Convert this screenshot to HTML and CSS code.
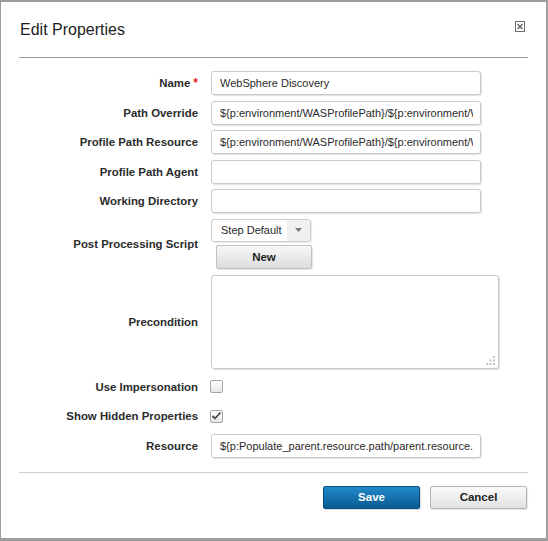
FILE: index.html
```html
<!DOCTYPE html>
<html>
<head>
<meta charset="utf-8">
<link rel="stylesheet" href="styles.css">
</head>
<body>
<div class="dialog">
  <div class="header">
    <h1 class="title">Edit Properties</h1>
    <span class="close">
      <svg width="10" height="11" viewBox="0 0 10 11"><rect x="0.5" y="0.5" width="9" height="10" fill="#fff" stroke="#6f6f6f"/><path d="M2.5 3 L7.5 8 M7.5 3 L2.5 8" stroke="#555" stroke-width="1.1"/></svg>
    </span>
  </div>
  <div class="form">
    <label class="lbl">Name<span class="req">*</span></label>
    <div class="field"><div class="input"><span class="val">WebSphere Discovery</span></div></div>

    <label class="lbl">Path Override</label>
    <div class="field"><div class="input"><span class="val">${p:environment/WASProfilePath}/${p:environment/W</span></div></div>

    <label class="lbl">Profile Path Resource</label>
    <div class="field"><div class="input"><span class="val">${p:environment/WASProfilePath}/${p:environment/W</span></div></div>

    <label class="lbl">Profile Path Agent</label>
    <div class="field"><div class="input"></div></div>

    <label class="lbl">Working Directory</label>
    <div class="field"><div class="input"></div></div>

    <label class="lbl">Post Processing Script</label>
    <div class="field stack">
      <div class="select"><span class="sel-text">Step Default</span><span class="sel-arrow"><svg width="7" height="4" viewBox="0 0 7 4"><path d="M0 0 H7 L3.5 4 Z" fill="#7a7a7a"/></svg></span></div>
      <button class="btn-new">New</button>
    </div>

    <label class="lbl">Precondition</label>
    <div class="field"><div class="textarea"><svg class="grip" width="10" height="10" viewBox="0 0 10 10" fill="#c4c4c4"><rect x="7" y="0" width="2" height="2"/><rect x="3.5" y="3.5" width="2" height="2"/><rect x="7" y="3.5" width="2" height="2"/><rect x="0" y="7" width="2" height="2"/><rect x="3.5" y="7" width="2" height="2"/><rect x="7" y="7" width="2" height="2"/></svg></div></div>

    <label class="lbl">Use Impersonation</label>
    <div class="field check-row"><span class="checkbox"></span></div>

    <label class="lbl">Show Hidden Properties</label>
    <div class="field check-row"><span class="checkbox"><svg width="11" height="10" viewBox="0 0 11 10"><path d="M1.5 5 L4 7.5 L9.5 1.5" fill="none" stroke="#4a4a4a" stroke-width="1.8"/></svg></span></div>

    <label class="lbl">Resource</label>
    <div class="field"><div class="input"><span class="val">${p:Populate_parent.resource.path/parent.resource.</span></div></div>
  </div>
  <div class="footer">
    <button class="btn btn-save">Save</button>
    <button class="btn btn-cancel">Cancel</button>
  </div>
</div>
</body>
</html>
```

FILE: styles.css
```css
html, body {
  margin: 0;
  padding: 0;
  background: #fff;
}
body {
  font-family: "Liberation Sans", Arial, sans-serif;
  color: #333;
}
.dialog {
  box-sizing: border-box;
  width: 548px;
  height: 541px;
  border-style: solid;
  border-color: #9d9d9d;
  border-width: 2px 2px 3px 1px;
  background: #fff;
  padding: 0 18px;
  display: flex;
  flex-direction: column;
}
.header {
  height: 55px;
  flex: none;
  border-bottom: 1px solid #9a9a9a;
  display: flex;
  align-items: flex-start;
  justify-content: space-between;
}
.title {
  margin: 18px 0 0 1px;
  font-size: 16px;
  font-weight: normal;
  color: #1e1e1e;
  line-height: 20px;
}
.close {
  display: block;
  margin: 19px 3px 0 0;
  width: 10px;
  height: 11px;
}
.close svg { display: block; }
.form {
  display: grid;
  grid-template-columns: 179px 1fr;
  column-gap: 13px;
  row-gap: 5.5px;
  margin-top: 13px;
  align-items: center;
}
.lbl {
  text-align: right;
  font-weight: bold;
  font-size: 11.4px;
  color: #2b2b2b;
  white-space: nowrap;
}
.req {
  color: #e0191f;
  margin-left: 3px;
  font-size: 12px;
}
.field {
  display: flex;
}
.input {
  box-sizing: border-box;
  width: 270px;
  height: 24px;
  border: 1px solid #cacaca;
  border-radius: 3px;
  box-shadow: 1px 1px 1px rgba(0,0,0,0.12);
  padding: 0 7px 0 8px;
  font-size: 11px;
  line-height: 22px;
  color: #2a2a2a;
  background: #fff;
  display: flex;
}
.val {
  flex: 1;
  min-width: 0;
  white-space: nowrap;
  overflow: hidden;
}
.stack {
  flex-direction: column;
  gap: 3px;
  align-items: flex-start;
}
.select {
  box-sizing: border-box;
  width: 100px;
  height: 23px;
  border: 1px solid #cccccc;
  border-radius: 3px;
  box-shadow: 1px 1px 1px rgba(0,0,0,0.08);
  display: flex;
  overflow: hidden;
  background: #fff;
}
.sel-text {
  flex: 1;
  padding-left: 9px;
  font-size: 11px;
  line-height: 21px;
  color: #2a2a2a;
}
.sel-arrow {
  width: 23px;
  background: #f0f0f0;
  display: flex;
  align-items: center;
  justify-content: center;
}
.sel-arrow svg { display: block; }
.btn-new {
  box-sizing: border-box;
  margin-left: 5px;
  width: 96px;
  height: 24px;
  border: 1px solid #c0c0c0;
  border-radius: 2px;
  background: linear-gradient(#f7f7f7, #dddddd);
  box-shadow: 1px 1px 1px rgba(0,0,0,0.1);
  font-family: "Liberation Sans", Arial, sans-serif;
  font-weight: bold;
  font-size: 11.5px;
  color: #1e1e1e;
  padding: 0;
}
.textarea {
  position: relative;
  box-sizing: border-box;
  width: 288px;
  height: 94px;
  margin-top: 1px;
  border: 1px solid #c8c8c8;
  border-radius: 3px;
  box-shadow: 1px 1px 1px rgba(0,0,0,0.12);
  background: #fff;
}
.grip {
  position: absolute;
  right: 2px;
  bottom: 2px;
}
.check-row {
  height: 24px;
  align-items: center;
}
.checkbox {
  box-sizing: border-box;
  width: 13px;
  height: 13px;
  border: 1px solid #a6a6a6;
  border-radius: 2px;
  background: linear-gradient(#ffffff, #e6e6e6);
  display: flex;
  align-items: center;
  justify-content: center;
  margin-left: -1px;
}
.checkbox svg { display: block; }
.footer {
  margin-top: 14px;
  border-top: 1px solid #cfcfcf;
  padding-top: 13px;
  display: flex;
  justify-content: flex-end;
  gap: 10px;
  padding-right: 1px;
}
.btn {
  box-sizing: border-box;
  width: 97px;
  height: 23px;
  border-radius: 2px;
  font-family: "Liberation Sans", Arial, sans-serif;
  font-weight: bold;
  font-size: 11.5px;
  padding: 0;
}
.btn-save {
  border: 1px solid #0a4d7c;
  background: linear-gradient(#2189c8, #0a5b93);
  color: #fff;
  box-shadow: 1px 1px 1px rgba(0,0,0,0.15);
}
.btn-cancel {
  border: 1px solid #b4b4b4;
  background: linear-gradient(#fbfbfb, #e1e1e1);
  color: #1e1e1e;
  box-shadow: 1px 1px 1px rgba(0,0,0,0.1);
}
```
